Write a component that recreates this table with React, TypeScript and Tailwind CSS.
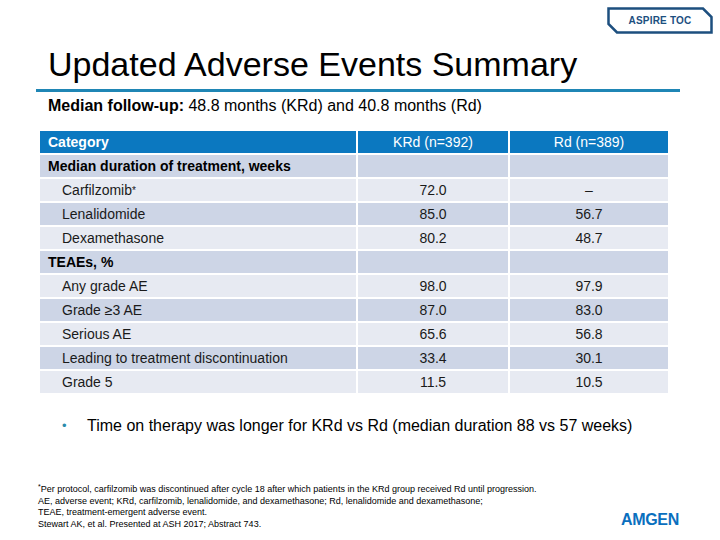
import React from "react";

type Row =
  | { kind: "section"; label: string }
  | { kind: "item"; label: React.ReactNode; krd: string; rd: string };

const rows: Row[] = [
  { kind: "section", label: "Median duration of treatment, weeks" },
  {
    kind: "item",
    label: (
      <>
        Carfilzomib<sup className="text-[10px] relative -top-[1px]">*</sup>
      </>
    ),
    krd: "72.0",
    rd: "–",
  },
  { kind: "item", label: "Lenalidomide", krd: "85.0", rd: "56.7" },
  { kind: "item", label: "Dexamethasone", krd: "80.2", rd: "48.7" },
  { kind: "section", label: "TEAEs, %" },
  { kind: "item", label: "Any grade AE", krd: "98.0", rd: "97.9" },
  { kind: "item", label: "Grade ≥3 AE", krd: "87.0", rd: "83.0" },
  { kind: "item", label: "Serious AE", krd: "65.6", rd: "56.8" },
  { kind: "item", label: "Leading to treatment discontinuation", krd: "33.4", rd: "30.1" },
  { kind: "item", label: "Grade 5", krd: "11.5", rd: "10.5" },
];

function TocBadge() {
  return (
    <div className="relative w-[106px] h-[27px] flex items-center justify-center">
      <svg className="absolute inset-0" width="106" height="27" viewBox="0 0 106 27">
        <polygon
          points="1.5,1.5 96,1.5 104.5,10 104.5,25.5 10,25.5 1.5,17"
          fill="white"
          stroke="#1d4f7f"
          strokeWidth="2.5"
        />
      </svg>
      <span className="relative text-[10px] font-bold text-[#1d4f7f] tracking-[0.2px]">ASPIRE TOC</span>
    </div>
  );
}

export default function App() {
  return (
    <div className="w-[720px] h-[540px] bg-white text-[#111] font-['Liberation_Sans',Arial,sans-serif] flex flex-col overflow-hidden">
      {/* top badge */}
      <div className="flex justify-end pt-[7px] pr-[7px]">
        <TocBadge />
      </div>

      {/* Title */}
      <h1 className="mt-[13px] pl-[48px] text-[34px] leading-none font-normal text-black">
        Updated Adverse Events Summary
      </h1>
      <div className="mt-[8px] ml-[36px] w-[644px] h-[3px] bg-[#1f86b5]" />

      <p className="mt-[5px] pl-[48px] text-[16px] leading-[18px] text-black">
        <span className="font-bold">Median follow-up:</span> 48.8 months (KRd) and 40.8 months (Rd)
      </p>

      {/* Table */}
      <div className="mt-[16px] ml-[40px] w-[628px] grid grid-cols-[316px_150px_158px] gap-[2px] text-[14px] leading-[22px]">
        <div className="h-[22px] bg-[#0b78c0] text-white font-bold pl-[8px]">Category</div>
        <div className="h-[22px] bg-[#0b78c0] text-white text-center">KRd (n=392)</div>
        <div className="h-[22px] bg-[#0b78c0] text-white text-center">Rd (n=389)</div>

        {rows.map((r, i) => {
          const bg = i % 2 === 0 ? "bg-[#cdd5e6]" : "bg-[#e7eaf2]";
          if (r.kind === "section") {
            return (
              <React.Fragment key={i}>
                <div className={`h-[22px] ${bg} font-bold pl-[8px] text-black`}>{r.label}</div>
                <div className={`h-[22px] ${bg}`} />
                <div className={`h-[22px] ${bg}`} />
              </React.Fragment>
            );
          }
          return (
            <React.Fragment key={i}>
              <div className={`h-[22px] ${bg} pl-[22px] text-[#1a1a1a]`}>{r.label}</div>
              <div className={`h-[22px] ${bg} text-center text-[#1a1a1a]`}>{r.krd}</div>
              <div className={`h-[22px] ${bg} text-center text-[#1a1a1a]`}>{r.rd}</div>
            </React.Fragment>
          );
        })}
      </div>

      {/* Bullet */}
      <div className="mt-[24px] pl-[62px] flex items-start text-[16px] leading-[18px] text-black">
        <span className="w-[25px] text-[#2b8bab] text-[13px]">•</span>
        <span>Time on therapy was longer for KRd vs Rd (median duration 88 vs 57 weeks)</span>
      </div>

      {/* Footer */}
      <div className="mt-[49px] pl-[38px] pr-[41px] flex justify-between items-end">
        <div className="text-[9px] leading-[11.5px] text-black">
          <p>
            <sup className="text-[7px]">*</sup>Per protocol, carfilzomib was discontinued after cycle 18 after which patients in the KRd group received Rd until progression.
          </p>
          <p>AE, adverse event; KRd, carfilzomib, lenalidomide, and dexamethasone; Rd, lenalidomide and dexamethasone;</p>
          <p>TEAE, treatment-emergent adverse event.</p>
          <p>Stewart AK, et al. Presented at ASH 2017; Abstract 743.</p>
        </div>
        <div className="mb-[3px] text-[16px] leading-[15px] font-bold tracking-[-0.3px] text-[#0a6fbe]">
          AMGEN
        </div>
      </div>
    </div>
  );
}
